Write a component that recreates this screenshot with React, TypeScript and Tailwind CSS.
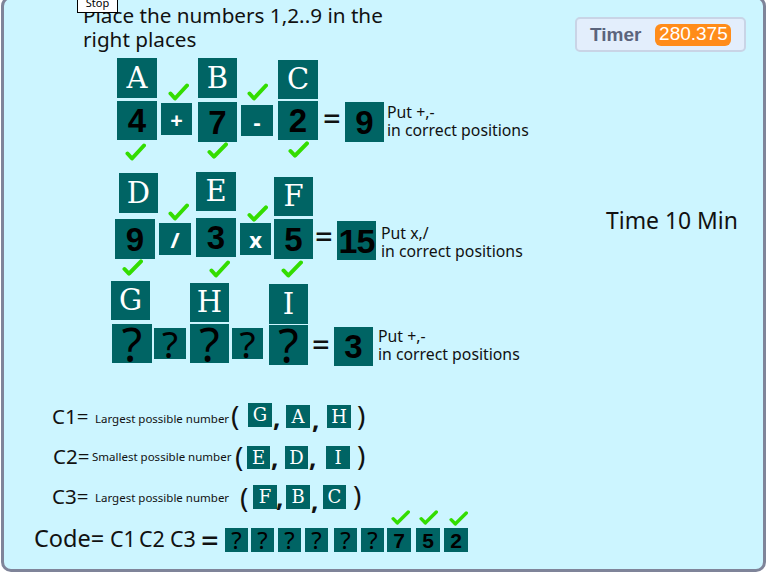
import React from "react";

const noto = "font-['Noto_Sans','Open_Sans',sans-serif]";

function Tile({ pos, kind, children }: { pos: string; kind: string; children: React.ReactNode }) {
  const styles: Record<string, string> = {
    letter: "font-['DejaVu_Serif',serif] text-white text-[29px] leading-none",
    letterSmall: "font-['DejaVu_Serif',serif] text-white text-[18px] leading-none",
    digit: "font-['Liberation_Sans',sans-serif] font-bold text-black text-[33px] leading-none",
    digitWide: "font-['Liberation_Sans',sans-serif] font-bold text-black text-[34px] tracking-[-1px] leading-none",
    digitSmall: "font-['Liberation_Sans',sans-serif] font-bold text-black text-[21px] leading-none",
    op: `${noto} font-bold text-white text-[22px] leading-none`,
    q: `${noto} text-black text-[47px] leading-[38px]`,
    qMid: `${noto} text-black text-[37px] leading-[30px]`,
    qSmall: `${noto} text-black text-[24px] leading-none`,
  };
  return (
    <div className={`absolute flex items-center justify-center bg-[#006464] ${pos} ${styles[kind]}`}>
      {children}
    </div>
  );
}

function Check({ pos }: { pos: string }) {
  return (
    <svg className={`absolute ${pos}`} viewBox="0 0 21 18" fill="none" preserveAspectRatio="none">
      <path d="M2.5 10.5 L7 15.5 L19 2.5" stroke="#33dd00" strokeWidth="4" strokeLinecap="round" strokeLinejoin="round" />
    </svg>
  );
}

function Label({ pos, size, children }: { pos: string; size: string; children: React.ReactNode }) {
  return (
    <div className={`absolute whitespace-pre ${noto} text-[#111111] ${pos} ${size}`}>{children}</div>
  );
}

export default function App() {
  return (
    <div className="relative w-[767px] h-[575px] overflow-hidden bg-white">
      {/* Stage */}
      <div className="absolute left-[1px] top-[-4px] w-[765px] h-[576px] rounded-[10px] border-[3px] border-[#7f8499] bg-[#ccf5ff]" />

      {/* Stop button */}
      <div className="absolute left-[77px] top-[-4px] z-10 flex h-[17px] w-[41px] items-start justify-center overflow-hidden border border-black bg-white font-['Noto_Sans',sans-serif] text-[11px] leading-[15px] text-black">
        <span className="-mt-[2px]">Stop</span>
      </div>

      {/* Title */}
      <Label pos="left-[83px] top-[3px] leading-[24px]" size="text-[20.7px]">
        {"Place the numbers 1,2..9 in the\nright places"}
      </Label>

      {/* Timer monitor */}
      <div className="absolute left-[575px] top-[17px] flex h-[35px] w-[171px] items-center rounded-[5px] border-2 border-[#c9d4e6] bg-[#e3eefc] pl-[13px]">
        <span className="pt-[1px] font-['Liberation_Sans',sans-serif] text-[19px] font-bold text-[#5b647c]">Timer</span>
        <span className="ml-[14px] flex h-[22px] w-[76px] items-center justify-center rounded-[6px] bg-[#ff8c1a] font-['Liberation_Sans',sans-serif] text-[19px] text-white">
          280.375
        </span>
      </div>

      <Label pos="left-[606px] top-[204px]" size="text-[22.9px]">Time 10 Min</Label>

      {/* Row 1 */}
      <Tile pos="left-[117px] top-[58px] w-[40px] h-[40px]" kind="letter">A</Tile>
      <Tile pos="left-[198px] top-[58px] w-[39px] h-[40px]" kind="letter">B</Tile>
      <Tile pos="left-[278px] top-[60px] w-[40px] h-[39px]" kind="letter">C</Tile>
      <Tile pos="left-[117px] top-[101px] w-[40px] h-[39px]" kind="digit">4</Tile>
      <Tile pos="left-[161px] top-[103px] w-[31px] h-[32px]" kind="op">+</Tile>
      <Tile pos="left-[198px] top-[102px] w-[39px] h-[40px]" kind="digit">7</Tile>
      <Tile pos="left-[241px] top-[105px] w-[32px] h-[31px]" kind="op">-</Tile>
      <Tile pos="left-[278px] top-[101px] w-[40px] h-[39px]" kind="digit">2</Tile>
      <Label pos="left-[323px] top-[100px] leading-[36px] font-medium" size="text-[31px]">=</Label>
      <Tile pos="left-[345px] top-[102px] w-[39px] h-[40px]" kind="digit">9</Tile>
      <Label pos="left-[387px] top-[103px] leading-[18px]" size="text-[15.8px]">{"Put +,-\nin correct positions"}</Label>
      <Check pos="left-[168px] top-[83px] w-[21px] h-[18px]" />
      <Check pos="left-[247px] top-[83px] w-[21px] h-[18px]" />
      <Check pos="left-[125px] top-[143px] w-[21px] h-[18px]" />
      <Check pos="left-[207px] top-[142px] w-[21px] h-[17px]" />
      <Check pos="left-[288px] top-[141px] w-[21px] h-[17px]" />

      {/* Row 2 */}
      <Tile pos="left-[119px] top-[173px] w-[39px] h-[40px]" kind="letter">D</Tile>
      <Tile pos="left-[196px] top-[172px] w-[40px] h-[39px]" kind="letter">E</Tile>
      <Tile pos="left-[274px] top-[177px] w-[39px] h-[39px]" kind="letter">F</Tile>
      <Tile pos="left-[115px] top-[219px] w-[40px] h-[40px]" kind="digit">9</Tile>
      <Tile pos="left-[159px] top-[223px] w-[32px] h-[32px]" kind="op">/</Tile>
      <Tile pos="left-[196px] top-[218px] w-[40px] h-[39px]" kind="digit">3</Tile>
      <Tile pos="left-[240px] top-[223px] w-[31px] h-[32px]" kind="op">x</Tile>
      <Tile pos="left-[274px] top-[219px] w-[39px] h-[40px]" kind="digit">5</Tile>
      <Label pos="left-[315px] top-[218px] leading-[36px] font-medium" size="text-[31px]">=</Label>
      <Tile pos="left-[337px] top-[221px] w-[39px] h-[39px]" kind="digitWide">15</Tile>
      <Label pos="left-[381px] top-[224px] leading-[18px]" size="text-[15.8px]">{"Put x,/\nin correct positions"}</Label>
      <Check pos="left-[168px] top-[203px] w-[21px] h-[18px]" />
      <Check pos="left-[247px] top-[205px] w-[21px] h-[17px]" />
      <Check pos="left-[122px] top-[259px] w-[21px] h-[17px]" />
      <Check pos="left-[209px] top-[260px] w-[21px] h-[18px]" />
      <Check pos="left-[281px] top-[260px] w-[22px] h-[18px]" />

      {/* Row 3 */}
      <Tile pos="left-[111px] top-[281px] w-[39px] h-[39px]" kind="letter">G</Tile>
      <Tile pos="left-[190px] top-[283px] w-[39px] h-[39px]" kind="letter">H</Tile>
      <Tile pos="left-[269px] top-[284px] w-[39px] h-[40px]" kind="letter">I</Tile>
      <Tile pos="left-[112px] top-[324px] w-[40px] h-[39px]" kind="q">?</Tile>
      <Tile pos="left-[154px] top-[328px] w-[32px] h-[31px]" kind="qMid">?</Tile>
      <Tile pos="left-[190px] top-[324px] w-[39px] h-[39px]" kind="q">?</Tile>
      <Tile pos="left-[232px] top-[328px] w-[31px] h-[31px]" kind="qMid">?</Tile>
      <Tile pos="left-[269px] top-[325px] w-[39px] h-[40px]" kind="q">?</Tile>
      <Label pos="left-[312px] top-[326px] leading-[36px] font-medium" size="text-[31px]">=</Label>
      <Tile pos="left-[334px] top-[327px] w-[39px] h-[39px]" kind="digit">3</Tile>
      <Label pos="left-[378px] top-[327px] leading-[18px]" size="text-[15.8px]">{"Put +,-\nin correct positions"}</Label>

      {/* C1 */}
      <Label pos="left-[52px] top-[401px]" size="text-[20.5px]">C1=</Label>
      <Label pos="left-[95px] top-[410px]" size="text-[11.5px]">Largest possible number</Label>
      <Label pos="left-[231px] top-[394px]" size="text-[28px]">(</Label>
      <Tile pos="left-[248px] top-[403px] w-[24px] h-[24px]" kind="letterSmall">G</Tile>
      <Label pos="left-[273px] top-[398px] font-bold" size="text-[26px]">,</Label>
      <Tile pos="left-[286px] top-[405px] w-[24px] h-[23px]" kind="letterSmall">A</Tile>
      <Label pos="left-[312px] top-[400px] font-bold" size="text-[26px]">,</Label>
      <Tile pos="left-[327px] top-[405px] w-[24px] h-[23px]" kind="letterSmall">H</Tile>
      <Label pos="left-[357px] top-[394px]" size="text-[28px]">)</Label>

      {/* C2 */}
      <Label pos="left-[53px] top-[441px]" size="text-[20.5px]">C2=</Label>
      <Label pos="left-[92px] top-[448px]" size="text-[11.5px]">Smallest possible number</Label>
      <Label pos="left-[235px] top-[435px]" size="text-[28px]">(</Label>
      <Tile pos="left-[247px] top-[446px] w-[23px] h-[23px]" kind="letterSmall">E</Tile>
      <Label pos="left-[271px] top-[438px] font-bold" size="text-[26px]">,</Label>
      <Tile pos="left-[285px] top-[446px] w-[23px] h-[23px]" kind="letterSmall">D</Tile>
      <Label pos="left-[309px] top-[438px] font-bold" size="text-[26px]">,</Label>
      <Tile pos="left-[326px] top-[446px] w-[24px] h-[23px]" kind="letterSmall">I</Tile>
      <Label pos="left-[357px] top-[434px]" size="text-[28px]">)</Label>

      {/* C3 */}
      <Label pos="left-[52px] top-[481px]" size="text-[20.5px]">C3=</Label>
      <Label pos="left-[95px] top-[489px]" size="text-[11.5px]">Largest possible number</Label>
      <Label pos="left-[240px] top-[476px]" size="text-[28px]">(</Label>
      <Tile pos="left-[253px] top-[485px] w-[24px] h-[24px]" kind="letterSmall">F</Tile>
      <Label pos="left-[276px] top-[478px] font-bold" size="text-[26px]">,</Label>
      <Tile pos="left-[286px] top-[485px] w-[24px] h-[24px]" kind="letterSmall">B</Tile>
      <Label pos="left-[311px] top-[481px] font-bold" size="text-[26px]">,</Label>
      <Tile pos="left-[323px] top-[485px] w-[23px] h-[24px]" kind="letterSmall">C</Tile>
      <Label pos="left-[353px] top-[474px]" size="text-[28px]">)</Label>

      {/* Code */}
      <Label pos="left-[34px] top-[521px]" size="text-[23.5px]">Code=</Label>
      <Label pos="left-[110px] top-[523px]" size="text-[21.5px]">C1</Label>
      <Label pos="left-[139px] top-[523px]" size="text-[21.5px]">C2</Label>
      <Label pos="left-[170px] top-[523px]" size="text-[21.5px]">C3</Label>
      <Label pos="left-[201px] top-[517px] font-medium" size="text-[31px]">=</Label>
      <Tile pos="left-[225px] top-[528px] w-[23px] h-[24px]" kind="qSmall">?</Tile>
      <Tile pos="left-[251px] top-[528px] w-[23px] h-[24px]" kind="qSmall">?</Tile>
      <Tile pos="left-[278px] top-[528px] w-[23px] h-[24px]" kind="qSmall">?</Tile>
      <Tile pos="left-[305px] top-[528px] w-[23px] h-[24px]" kind="qSmall">?</Tile>
      <Tile pos="left-[334px] top-[528px] w-[23px] h-[24px]" kind="qSmall">?</Tile>
      <Tile pos="left-[361px] top-[528px] w-[23px] h-[24px]" kind="qSmall">?</Tile>
      <Tile pos="left-[387px] top-[528px] w-[24px] h-[24px]" kind="digitSmall">7</Tile>
      <Tile pos="left-[416px] top-[528px] w-[24px] h-[24px]" kind="digitSmall">5</Tile>
      <Tile pos="left-[444px] top-[528px] w-[24px] h-[24px]" kind="digitSmall">2</Tile>
      <Check pos="left-[391px] top-[510px] w-[19px] h-[15px]" />
      <Check pos="left-[419px] top-[510px] w-[19px] h-[15px]" />
      <Check pos="left-[449px] top-[511px] w-[19px] h-[15px]" />
    </div>
  );
}
